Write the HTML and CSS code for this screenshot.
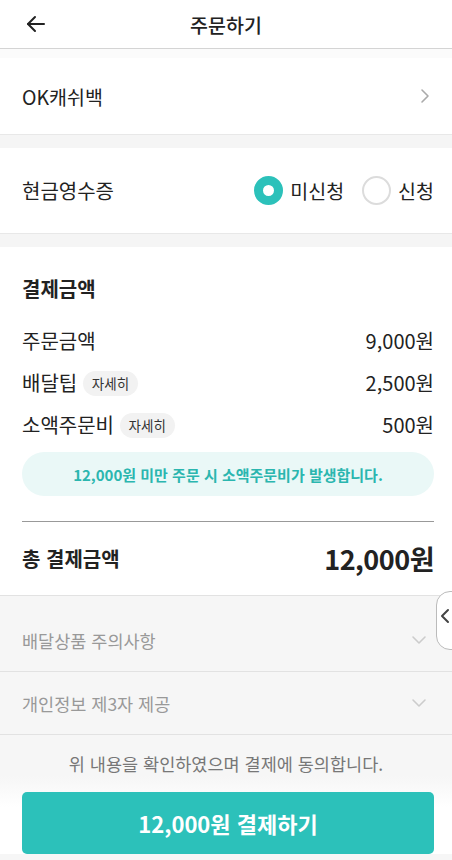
FILE: index.html
```html
<!DOCTYPE html>
<html lang="ko">
<head>
    <meta charset="UTF-8">
    <title>주문하기</title>
    <link rel="stylesheet" href="styles.css">
</head>
<body>
<div class="page">
  <header class="top-bar">
    <button type="button" class="back-btn" aria-label="뒤로">
      <svg width="24" height="24" viewBox="0 0 24 24" fill="none" stroke="#222" stroke-width="2" stroke-linecap="round" stroke-linejoin="round">
        <path d="M20 12H4"/>
        <path d="M11 5l-7 7 7 7"/>
      </svg>
    </button>
    <h1 class="title">주문하기</h1>
    <span></span>
  </header>
  <div class="top-gap"></div>

  <div class="row-section ok-row">
    <span>OK캐쉬백</span>
    <svg width="14" height="20" viewBox="0 0 14 20" fill="none" stroke="#aaa" stroke-width="1.6" stroke-linecap="round" stroke-linejoin="round">
      <path d="M4 4l6 6-6 6"/>
    </svg>
  </div>
  <div class="band"></div>

  <div class="row-section receipt-row">
    <span>현금영수증</span>
    <div class="radios">
      <label class="radio checked"><span class="dot"></span>미신청</label>
      <label class="radio"><span class="dot"></span>신청</label>
    </div>
  </div>
  <div class="band"></div>

  <section class="pay">
    <h2 class="pay-title">결제금액</h2>
    <div class="pay-row">
      <span>주문금액</span>
      <span>9,000원</span>
    </div>
    <div class="pay-row">
      <span>배달팁 <span class="chip">자세히</span></span>
      <span>2,500원</span>
    </div>
    <div class="pay-row">
      <span>소액주문비 <span class="chip">자세히</span></span>
      <span>500원</span>
    </div>
    <p class="notice">12,000원 미만 주문 시 소액주문비가 발생합니다.</p>
    <div class="total-row">
      <span class="total-label">총 결제금액</span>
      <span class="total-value">12,000원</span>
    </div>
  </section>

  <section class="terms">
    <div class="term-row">
      <span>배달상품 주의사항</span>
      <svg width="18" height="12" viewBox="0 0 18 12" fill="none" stroke="#ccc" stroke-width="1.6" stroke-linecap="round" stroke-linejoin="round">
        <path d="M3 3l6 6 6-6"/>
      </svg>
    </div>
    <div class="term-row">
      <span>개인정보 제3자 제공</span>
      <svg width="18" height="12" viewBox="0 0 18 12" fill="none" stroke="#ccc" stroke-width="1.6" stroke-linecap="round" stroke-linejoin="round">
        <path d="M3 3l6 6 6-6"/>
      </svg>
    </div>
    <p class="agree">위 내용을 확인하였으며 결제에 동의합니다.</p>
    <div class="bottom-bar">
      <button type="button" class="pay-btn">12,000원 결제하기</button>
    </div>
  </section>

  <div class="side-tab">
    <svg width="10" height="16" viewBox="0 0 10 16" fill="none" stroke="#444" stroke-width="2" stroke-linecap="round" stroke-linejoin="round">
      <path d="M8 2L2 8l6 6"/>
    </svg>
  </div>
</div>
</body>
</html>
```

FILE: styles.css
```css
*{
  box-sizing: border-box;
}

body{
  margin: 0;
  font-family: "Noto Sans CJK KR", "Noto Sans", sans-serif;
  color: #222;
  background: #fff;
}

.page{
  position: relative;
  width: 452px;
  height: 860px;
  overflow: hidden;
}

.top-bar{
  height: 49px;
  display: grid;
  grid-template-columns: 70px 1fr 70px;
  align-items: center;
  border-bottom: 1px solid #d4d4d4;
}

.back-btn{
  border: 0;
  background: none;
  padding: 0 0 0 24px;
  display: flex;
  align-items: center;
  height: 100%;
}

.title{
  margin: 0;
  text-align: center;
  font-size: 19.5px;
  font-weight: 500;
}

.top-gap{
  height: 9px;
  background: #fbfbfb;
}

.row-section{
  display: flex;
  justify-content: space-between;
  align-items: center;
  padding: 0 20px 0 22px;
}

.ok-row{
  height: 76px;
  font-size: 19.5px;
}

.receipt-row{
  height: 85px;
  font-size: 20px;
  padding-right: 18px;
}

.band{
  height: 14px;
  background: #f5f5f5;
  border-top: 1px solid #e8e8e8;
}

.radios{
  display: flex;
  align-items: center;
  gap: 18px;
}

.radio{
  display: flex;
  align-items: center;
  gap: 7px;
  font-size: 19.5px;
}

.dot{
  width: 29px;
  height: 29px;
  border-radius: 50%;
  border: 2px solid #dcdcdc;
  background: #fff;
}

.radio.checked .dot{
  border: 9px solid #2cc1ba;
}

.pay{
  padding: 28px 18px 0 22px;
}

.pay-title{
  margin: 0 0 16px;
  font-size: 20px;
  font-weight: 700;
  line-height: 28px;
}

.pay-row{
  height: 42px;
  display: flex;
  justify-content: space-between;
  align-items: center;
  font-size: 20px;
}

.chip{
  display: inline-block;
  padding: 2px 9px;
  border-radius: 14px;
  background: #f2f2f2;
  font-size: 13.5px;
  line-height: 21px;
  vertical-align: 2px;
  color: #333;
}

.notice{
  margin: 7px 0 0;
  height: 44px;
  border-radius: 22px;
  background: #eaf8f7;
  color: #2bb6af;
  font-size: 15px;
  font-weight: 700;
  display: flex;
  align-items: center;
  justify-content: center;
}

.total-row{
  margin-top: 25px;
  height: 74px;
  border-top: 1px solid #999;
  display: flex;
  justify-content: space-between;
  align-items: center;
}

.total-label{
  font-size: 20px;
  font-weight: 700;
}

.total-value{
  font-size: 27px;
  font-weight: 700;
  letter-spacing: -0.5px;
}

.terms{
  background: #f6f6f6;
  border-top: 1px solid #e2e2e2;
  padding-top: 13px;
  height: 266px;
}

.term-row{
  height: 63px;
  padding: 0 24px 0 22px;
  display: flex;
  justify-content: space-between;
  align-items: center;
  border-bottom: 1px solid #e2e2e2;
  font-size: 17.5px;
  color: #999;
}

.agree{
  margin: 17px 0 0;
  text-align: center;
  font-size: 17.5px;
  line-height: 24px;
  color: #777;
}

.bottom-bar{
  padding: 16px 18px 0 22px;
  background: linear-gradient(#f6f6f6, #fff 40%);
}

.pay-btn{
  width: 100%;
  height: 62px;
  border: 0;
  border-radius: 5px;
  background: #2cc1ba;
  color: #fff;
  font-family: inherit;
  font-size: 22px;
  font-weight: 700;
}

.side-tab{
  position: absolute;
  top: 591px;
  right: -2px;
  width: 18px;
  height: 59px;
  border: 1px solid #bbb;
  border-radius: 14px 0 0 14px;
  background: #fff;
  display: flex;
  align-items: center;
  justify-content: center;
  padding-bottom: 10px;
}
```
